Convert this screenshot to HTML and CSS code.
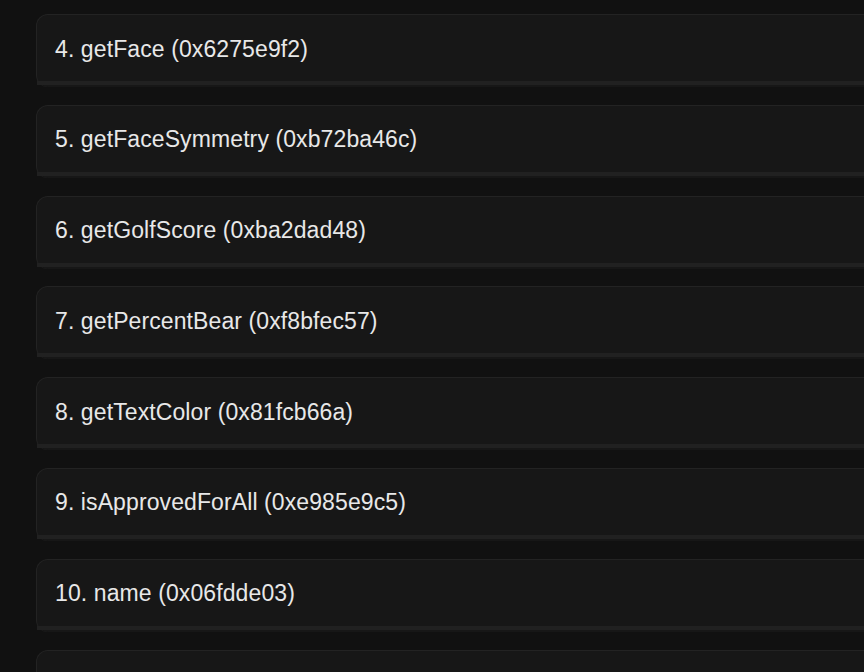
FILE: index.html
```html
<!DOCTYPE html>
<html>
<head>
<meta charset="utf-8">
<link rel="stylesheet" href="styles.css">
</head>
<body>
<div class="list">
  <div class="card"><div class="head">4. getFace (0x6275e9f2)</div></div>
  <div class="card"><div class="head">5. getFaceSymmetry (0xb72ba46c)</div></div>
  <div class="card"><div class="head">6. getGolfScore (0xba2dad48)</div></div>
  <div class="card"><div class="head">7. getPercentBear (0xf8bfec57)</div></div>
  <div class="card"><div class="head">8. getTextColor (0x81fcb66a)</div></div>
  <div class="card"><div class="head">9. isApprovedForAll (0xe985e9c5)</div></div>
  <div class="card"><div class="head">10. name (0x06fdde03)</div></div>
  <div class="card"><div class="head">11. owner (0x8da5cb5b)</div></div>
</div>
</body>
</html>
```
FILE: styles.css
```css
html, body {
  margin: 0;
  padding: 0;
  background: #111111;
  overflow: hidden;
  height: 672px;
}
.list {
  padding: 14px 0 0 36px;
  display: flex;
  flex-direction: column;
  gap: 17.8px;
  margin-right: -40px;
}
.card {
  background: #171717;
  border: 1px solid #232323;
  border-bottom: none;
  border-radius: 12px;
  padding-bottom: 2px;
}
.head {
  height: 70px;
  border-bottom: 4px solid #212121;
  display: flex;
  align-items: center;
  padding-left: 18px;
  padding-top: 2px;
  box-sizing: border-box;
  font-family: "Liberation Sans", Arial, sans-serif;
  font-size: 23px;
  letter-spacing: 0.1px;
  color: #e8e8e8;
}
```
